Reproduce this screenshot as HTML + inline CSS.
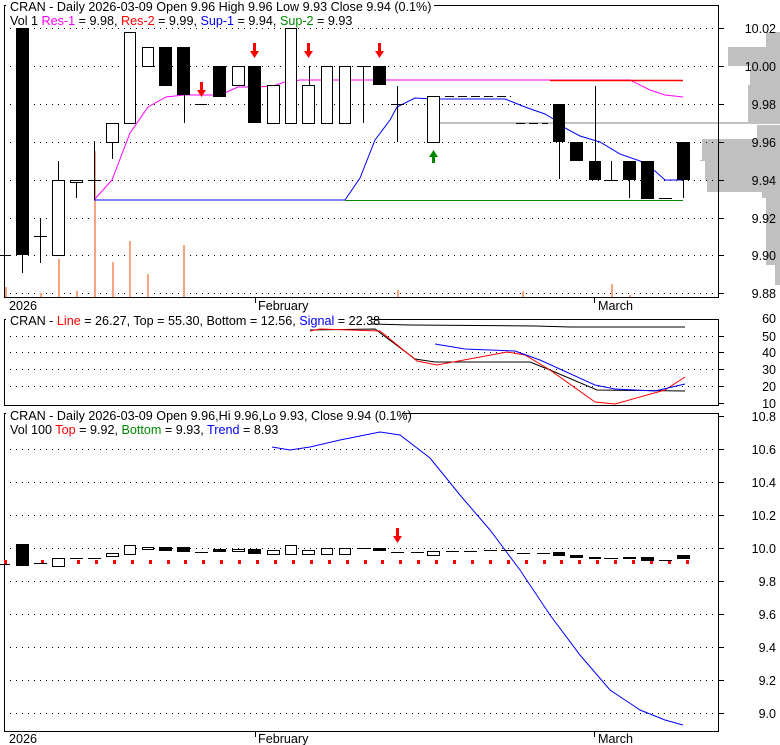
<!DOCTYPE html>
<html><head><meta charset="utf-8"><style>
html,body{margin:0;padding:0;background:#fff;}
svg{display:block;font-family:"Liberation Sans",Arial,sans-serif;}
.t{font-size:12.6px;}
</style></head><body>
<svg width="780" height="745" viewBox="0 0 780 745" xmlns="http://www.w3.org/2000/svg">
<rect width="780" height="745" fill="#fff"/>
<g fill="#c0c0c0">
<rect x="766" y="32" width="14" height="15"/>
<rect x="728" y="47" width="52" height="19"/>
<rect x="750" y="66" width="30" height="19"/>
<rect x="748" y="85" width="32" height="38"/>
<rect x="757" y="125" width="23" height="14"/>
<rect x="702" y="139" width="78" height="21"/>
<rect x="700" y="160" width="80" height="20"/>
<rect x="707" y="180" width="73" height="12"/>
<rect x="762" y="192" width="18" height="6"/>
<rect x="766" y="198" width="14" height="67"/>
<rect x="775" y="265" width="5" height="20"/>
<rect x="437" y="122" width="343" height="2"/>
</g>
<rect x="690" y="161" width="15" height="19" fill="#fff"/>
<g stroke="#000" stroke-dasharray="1,5" stroke-width="1">
<line x1="10" y1="28.5" x2="716" y2="28.5"/><line x1="10" y1="66.5" x2="716" y2="66.5"/>
<line x1="10" y1="104.5" x2="716" y2="104.5"/><line x1="10" y1="142.5" x2="716" y2="142.5"/>
<line x1="10" y1="180.5" x2="716" y2="180.5"/><line x1="10" y1="218.5" x2="716" y2="218.5"/>
<line x1="10" y1="255.5" x2="716" y2="255.5"/><line x1="10" y1="293.5" x2="716" y2="293.5"/>
</g>
<g fill="#f4a582">
<rect x="5" y="287" width="2" height="10"/><rect x="58" y="259" width="2" height="38"/>
<rect x="40" y="293" width="2" height="4"/><rect x="76" y="291" width="2" height="6"/>
<rect x="94" y="151" width="2" height="146"/><rect x="112" y="262" width="2" height="35"/>
<rect x="129" y="241" width="2" height="56"/><rect x="147" y="274" width="2" height="23"/>
<rect x="183" y="245" width="2" height="52"/><rect x="397" y="290" width="2" height="7"/>
<rect x="522" y="291" width="2" height="6"/><rect x="611" y="284" width="2" height="13"/>
<rect x="629" y="295" width="2" height="2"/>
</g>
<rect x="4.5" y="5.5" width="714" height="292" fill="none" stroke="#000"/>
<g stroke="#000"><line x1="719" y1="28.5" x2="724" y2="28.5"/><line x1="719" y1="66.5" x2="724" y2="66.5"/><line x1="719" y1="104.5" x2="724" y2="104.5"/><line x1="719" y1="142.5" x2="724" y2="142.5"/><line x1="719" y1="180.5" x2="724" y2="180.5"/><line x1="719" y1="218.5" x2="724" y2="218.5"/><line x1="719" y1="255.5" x2="724" y2="255.5"/><line x1="719" y1="293.5" x2="724" y2="293.5"/></g>
<polyline fill="none" stroke="#f0f" points="94,200 112,180 130,133 148,107 166,97 184,95 220,95 238,87 255,87 273,86 285,82 300,80 630,80 650,90 665,95 683,97"/>
<line x1="550" y1="80.5" x2="683" y2="80.5" stroke="#f00" stroke-width="1.5"/>
<polyline fill="none" stroke="#00f" points="94,200 345,200 360,178 375,140 390,120 397,107 415,98 433,99 505,99 525,107 545,114 555,120 565,128 580,136 600,142 620,154 640,161 655,171 665,180 683,180"/>
<line x1="345" y1="200.5" x2="683" y2="200.5" stroke="#080"/>
<g stroke="#000" fill="none">
<line x1="4.5" y1="218" x2="4.5" y2="298"/><line x1="0" y1="255.5" x2="10" y2="255.5"/>
<line x1="22.5" y1="255" x2="22.5" y2="273"/>
<line x1="40.5" y1="218" x2="40.5" y2="263"/><line x1="34" y1="236.5" x2="47" y2="236.5"/>
<line x1="58.5" y1="161" x2="58.5" y2="180"/>
<line x1="76.5" y1="182" x2="76.5" y2="198"/>
<line x1="94.5" y1="141" x2="94.5" y2="200"/><line x1="88" y1="180.5" x2="101" y2="180.5"/>
<line x1="112.5" y1="142" x2="112.5" y2="159"/>
<line x1="184.5" y1="95" x2="184.5" y2="123"/>
<line x1="195" y1="104.5" x2="207" y2="104.5"/>
<line x1="309.5" y1="66" x2="309.5" y2="85"/>
<line x1="363.5" y1="66" x2="363.5" y2="123"/><line x1="357" y1="66.5" x2="370" y2="66.5"/>
<line x1="397.5" y1="86" x2="397.5" y2="142"/><line x1="391" y1="104.5" x2="404" y2="104.5"/>
<line x1="445" y1="96.5" x2="511" y2="96.5" stroke-dasharray="9,4"/>
<line x1="516" y1="123.5" x2="548" y2="123.5" stroke-dasharray="9,4"/>
<line x1="559.5" y1="142" x2="559.5" y2="179"/>
<line x1="595.5" y1="86" x2="595.5" y2="161"/>
<line x1="611.5" y1="161" x2="611.5" y2="180"/><line x1="604" y1="180.5" x2="618" y2="180.5"/>
<line x1="629.5" y1="180" x2="629.5" y2="198"/>
<line x1="659" y1="198.5" x2="672" y2="198.5"/>
<line x1="683.5" y1="180" x2="683.5" y2="198"/>
</g>
<g stroke="#000" fill="#fff">
<rect x="52.5" y="180.5" width="12" height="75"/>
<rect x="70.5" y="180.5" width="12" height="2"/>
<rect x="106.5" y="123.5" width="12" height="19"/>
<rect x="124.5" y="32.5" width="11" height="91"/>
<rect x="142.5" y="47.5" width="11" height="19"/>
<rect x="232.5" y="66.5" width="12" height="19"/>
<rect x="267.5" y="85.5" width="12" height="38"/>
<rect x="285.5" y="28.5" width="11" height="95"/>
<rect x="302.5" y="85.5" width="12" height="38"/>
<rect x="321.5" y="66.5" width="11" height="57"/>
<rect x="339.5" y="66.5" width="11" height="57"/>
<rect x="427.5" y="96.5" width="12" height="46"/>
</g>
<g fill="#000">
<rect x="16" y="28" width="13" height="227"/>
<rect x="159" y="47" width="13" height="39"/>
<rect x="177" y="47" width="13" height="48"/>
<rect x="213" y="66" width="13" height="31"/>
<rect x="248" y="66" width="13" height="57"/>
<rect x="373" y="66" width="13" height="19"/>
<rect x="553" y="104" width="12" height="38"/>
<rect x="570" y="142" width="13" height="19"/>
<rect x="589" y="161" width="12" height="19"/>
<rect x="623" y="161" width="13" height="19"/>
<rect x="641" y="161" width="13" height="38"/>
<rect x="677" y="142" width="13" height="38"/>
</g>
<g fill="#f00">
<path d="M200,82h3v8h3l-4.5,7l-4.5,-7h3z"/>
<path d="M253,43h3v8h3l-4.5,7l-4.5,-7h3z"/>
<path d="M307,43h3v8h3l-4.5,7l-4.5,-7h3z"/>
<path d="M378,43h3v8h3l-4.5,7l-4.5,-7h3z"/>
</g>
<path fill="#080" d="M432,163h3v-6h3l-4.5,-7l-4.5,7h3z"/>
<rect x="6" y="0" width="428" height="12" fill="#fff"/>
<text class="t" x="10" y="11">CRAN - Daily 2026-03-09 Open 9.96  High 9.96  Low 9.93  Close 9.94 (0.1%)</text>
<text class="t" x="10" y="25">Vol 1 <tspan fill="#f0f">Res-1</tspan> = 9.98, <tspan fill="#f00">Res-2</tspan> = 9.99, <tspan fill="#00f">Sup-1</tspan> = 9.94, <tspan fill="#080">Sup-2</tspan> = 9.93</text>
<g font-size="12.5" text-anchor="end">
<text x="776" y="33">10.02</text><text x="776" y="71">10.00</text><text x="776" y="109">9.98</text><text x="776" y="147">9.96</text><text x="776" y="185">9.94</text><text x="776" y="223">9.92</text><text x="776" y="260">9.90</text><text x="776" y="298">9.88</text>
</g>
<text class="t" x="9" y="310">2026</text>
<line x1="255.5" y1="298" x2="255.5" y2="303" stroke="#000"/>
<text class="t" x="258" y="310">February</text>
<line x1="594.5" y1="298" x2="594.5" y2="303" stroke="#000"/>
<text class="t" x="598" y="310">March</text>
<g stroke="#000" stroke-dasharray="1,5">
<line x1="10" y1="336.5" x2="716" y2="336.5"/><line x1="10" y1="352.5" x2="716" y2="352.5"/><line x1="10" y1="369.5" x2="716" y2="369.5"/><line x1="10" y1="386.5" x2="716" y2="386.5"/>
</g>
<rect x="4.5" y="319.5" width="714" height="86" fill="none" stroke="#000"/>
<g stroke="#000"><line x1="719" y1="336.5" x2="724" y2="336.5"/><line x1="719" y1="352.5" x2="724" y2="352.5"/><line x1="719" y1="369.5" x2="724" y2="369.5"/><line x1="719" y1="386.5" x2="724" y2="386.5"/><line x1="719" y1="403.5" x2="724" y2="403.5"/></g>
<polyline fill="none" stroke="#000" points="370,324 410,325 535,326 570,327 685,327"/>
<polyline fill="none" stroke="#000" points="310,330 375,329 415,359 435,362 530,362 550,370 597,390 685,391"/>
<polyline fill="none" stroke="#f00" points="310,331 320,329 380,331 417,361 437,365 507,352 525,355 550,370 595,402 615,404 665,390 685,377"/>
<polyline fill="none" stroke="#00f" points="435,344 465,349 515,351 540,360 595,385 615,389 655,391 685,384"/>
<rect x="6" y="314" width="366" height="12" fill="#fff"/>
<text class="t" x="10" y="325">CRAN - <tspan fill="#f00">Line</tspan> = 26.27, Top = 55.30, Bottom = 12.56, <tspan fill="#00f">Signal</tspan> = 22.38</text>
<g font-size="12.5" text-anchor="end">
<text x="776" y="323">60</text><text x="776" y="341">50</text><text x="776" y="357">40</text><text x="776" y="374">30</text><text x="776" y="391">20</text><text x="776" y="408">10</text>
</g>
<g stroke="#000" stroke-dasharray="1,5">
<line x1="10" y1="449.5" x2="716" y2="449.5"/><line x1="10" y1="482.5" x2="716" y2="482.5"/><line x1="10" y1="515.5" x2="716" y2="515.5"/><line x1="10" y1="548.5" x2="716" y2="548.5"/><line x1="10" y1="581.5" x2="716" y2="581.5"/><line x1="10" y1="614.5" x2="716" y2="614.5"/><line x1="10" y1="647.5" x2="716" y2="647.5"/><line x1="10" y1="680.5" x2="716" y2="680.5"/><line x1="10" y1="713.5" x2="716" y2="713.5"/>
</g>
<rect x="4.5" y="413.5" width="714" height="318" fill="none" stroke="#000"/>
<g stroke="#000"><line x1="719" y1="416.5" x2="724" y2="416.5"/><line x1="719" y1="449.5" x2="724" y2="449.5"/><line x1="719" y1="482.5" x2="724" y2="482.5"/><line x1="719" y1="515.5" x2="724" y2="515.5"/><line x1="719" y1="548.5" x2="724" y2="548.5"/><line x1="719" y1="581.5" x2="724" y2="581.5"/><line x1="719" y1="614.5" x2="724" y2="614.5"/><line x1="719" y1="647.5" x2="724" y2="647.5"/><line x1="719" y1="680.5" x2="724" y2="680.5"/><line x1="719" y1="713.5" x2="724" y2="713.5"/></g>
<polyline fill="none" stroke="#00f" points="272,447 290,450 310,447 340,440 380,432 400,435 430,458 460,495 490,530 520,570 550,615 580,655 610,690 640,710 665,720 683,725"/>
<g fill="#f00">
<rect x="4" y="560" width="3" height="4"/><rect x="41" y="560" width="3" height="4"/><rect x="77" y="560" width="3" height="4"/><rect x="95" y="560" width="3" height="4"/><rect x="113" y="560" width="3" height="4"/><rect x="131" y="560" width="3" height="4"/><rect x="149" y="560" width="3" height="4"/><rect x="167" y="560" width="3" height="4"/><rect x="184" y="560" width="3" height="4"/><rect x="202" y="560" width="3" height="4"/><rect x="220" y="560" width="3" height="4"/><rect x="238" y="560" width="3" height="4"/><rect x="256" y="560" width="3" height="4"/><rect x="274" y="560" width="3" height="4"/><rect x="292" y="560" width="3" height="4"/><rect x="310" y="560" width="3" height="4"/><rect x="328" y="560" width="3" height="4"/><rect x="346" y="560" width="3" height="4"/><rect x="364" y="560" width="3" height="4"/><rect x="381" y="560" width="3" height="4"/><rect x="399" y="560" width="3" height="4"/><rect x="417" y="560" width="3" height="4"/><rect x="435" y="560" width="3" height="4"/><rect x="453" y="560" width="3" height="4"/><rect x="471" y="560" width="3" height="4"/><rect x="489" y="560" width="3" height="4"/><rect x="507" y="560" width="3" height="4"/><rect x="525" y="560" width="3" height="4"/><rect x="543" y="560" width="3" height="4"/><rect x="560" y="560" width="3" height="4"/><rect x="578" y="560" width="3" height="4"/><rect x="596" y="560" width="3" height="4"/><rect x="614" y="560" width="3" height="4"/><rect x="632" y="560" width="3" height="4"/><rect x="650" y="560" width="3" height="4"/><rect x="668" y="560" width="3" height="4"/><rect x="686" y="560" width="3" height="4"/>
</g>
<g stroke="#000" fill="#fff">
<line x1="0" y1="564.5" x2="10" y2="564.5"/><line x1="34" y1="563.5" x2="47" y2="563.5"/>
<rect x="52.5" y="558.5" width="12" height="8"/>
<line x1="70" y1="558.5" x2="83" y2="558.5"/><line x1="88" y1="558.5" x2="101" y2="558.5"/>
<rect x="106.5" y="553.5" width="12" height="3"/>
<rect x="124.5" y="545.5" width="11" height="9"/>
<rect x="142.5" y="547.5" width="11" height="2"/>
<line x1="195" y1="552.5" x2="208" y2="552.5"/>
<rect x="232.5" y="549.5" width="12" height="2"/>
<rect x="267.5" y="550.5" width="12" height="4"/>
<rect x="285.5" y="545.5" width="11" height="9"/>
<rect x="302.5" y="550.5" width="12" height="4"/>
<rect x="321.5" y="548.5" width="11" height="6"/>
<rect x="339.5" y="548.5" width="11" height="6"/>
<line x1="357" y1="548.5" x2="370" y2="548.5"/>
<line x1="391" y1="552.5" x2="404" y2="552.5"/><line x1="411" y1="552.5" x2="424" y2="552.5"/>
<rect x="427.5" y="551.5" width="12" height="4"/>
<line x1="446" y1="551.5" x2="459" y2="551.5"/><line x1="464" y1="551.5" x2="477" y2="551.5"/><line x1="484" y1="550.5" x2="497" y2="550.5"/><line x1="501" y1="550.5" x2="514" y2="550.5"/><line x1="517" y1="553.5" x2="530" y2="553.5"/><line x1="537" y1="553.5" x2="550" y2="553.5"/>
<line x1="604" y1="558.5" x2="618" y2="558.5"/><line x1="659" y1="560.5" x2="672" y2="560.5"/>
</g>
<g fill="#000">
<rect x="16" y="544" width="13" height="22"/>
<rect x="159" y="547" width="13" height="4"/><rect x="177" y="547" width="13" height="5"/>
<rect x="213" y="549" width="13" height="3"/><rect x="248" y="549" width="13" height="5"/>
<rect x="373" y="548" width="13" height="3"/>
<rect x="553" y="552" width="12" height="4"/><rect x="570" y="555" width="13" height="3"/><rect x="589" y="557" width="12" height="2"/>
<rect x="623" y="557" width="13" height="2"/><rect x="641" y="557" width="13" height="4"/><rect x="677" y="555" width="13" height="4"/>
</g>
<path fill="#f00" d="M396,528h3v8h3l-4.5,7l-4.5,-7h3z"/>
<rect x="6" y="408" width="396" height="12" fill="#fff"/>
<text class="t" x="10" y="420">CRAN - Daily 2026-03-09 Open 9.96,Hi 9.96,Lo 9.93, Close 9.94 (0.1%)</text>
<text class="t" x="10" y="434">Vol 100 <tspan fill="#f00">Top</tspan> = 9.92, <tspan fill="#080">Bottom</tspan> = 9.93, <tspan fill="#00f">Trend</tspan> = 8.93</text>
<g font-size="12.5" text-anchor="end">
<text x="776" y="421">10.8</text><text x="776" y="454">10.6</text><text x="776" y="487">10.4</text><text x="776" y="520">10.2</text><text x="776" y="553">10.0</text><text x="776" y="586">9.8</text><text x="776" y="619">9.6</text><text x="776" y="652">9.4</text><text x="776" y="685">9.2</text><text x="776" y="718">9.0</text>
</g>
<text class="t" x="9" y="743">2026</text>
<line x1="255.5" y1="732" x2="255.5" y2="737" stroke="#000"/>
<text class="t" x="258" y="743">February</text>
<line x1="594.5" y1="732" x2="594.5" y2="737" stroke="#000"/>
<text class="t" x="598" y="743">March</text>
</svg>
</body></html>
